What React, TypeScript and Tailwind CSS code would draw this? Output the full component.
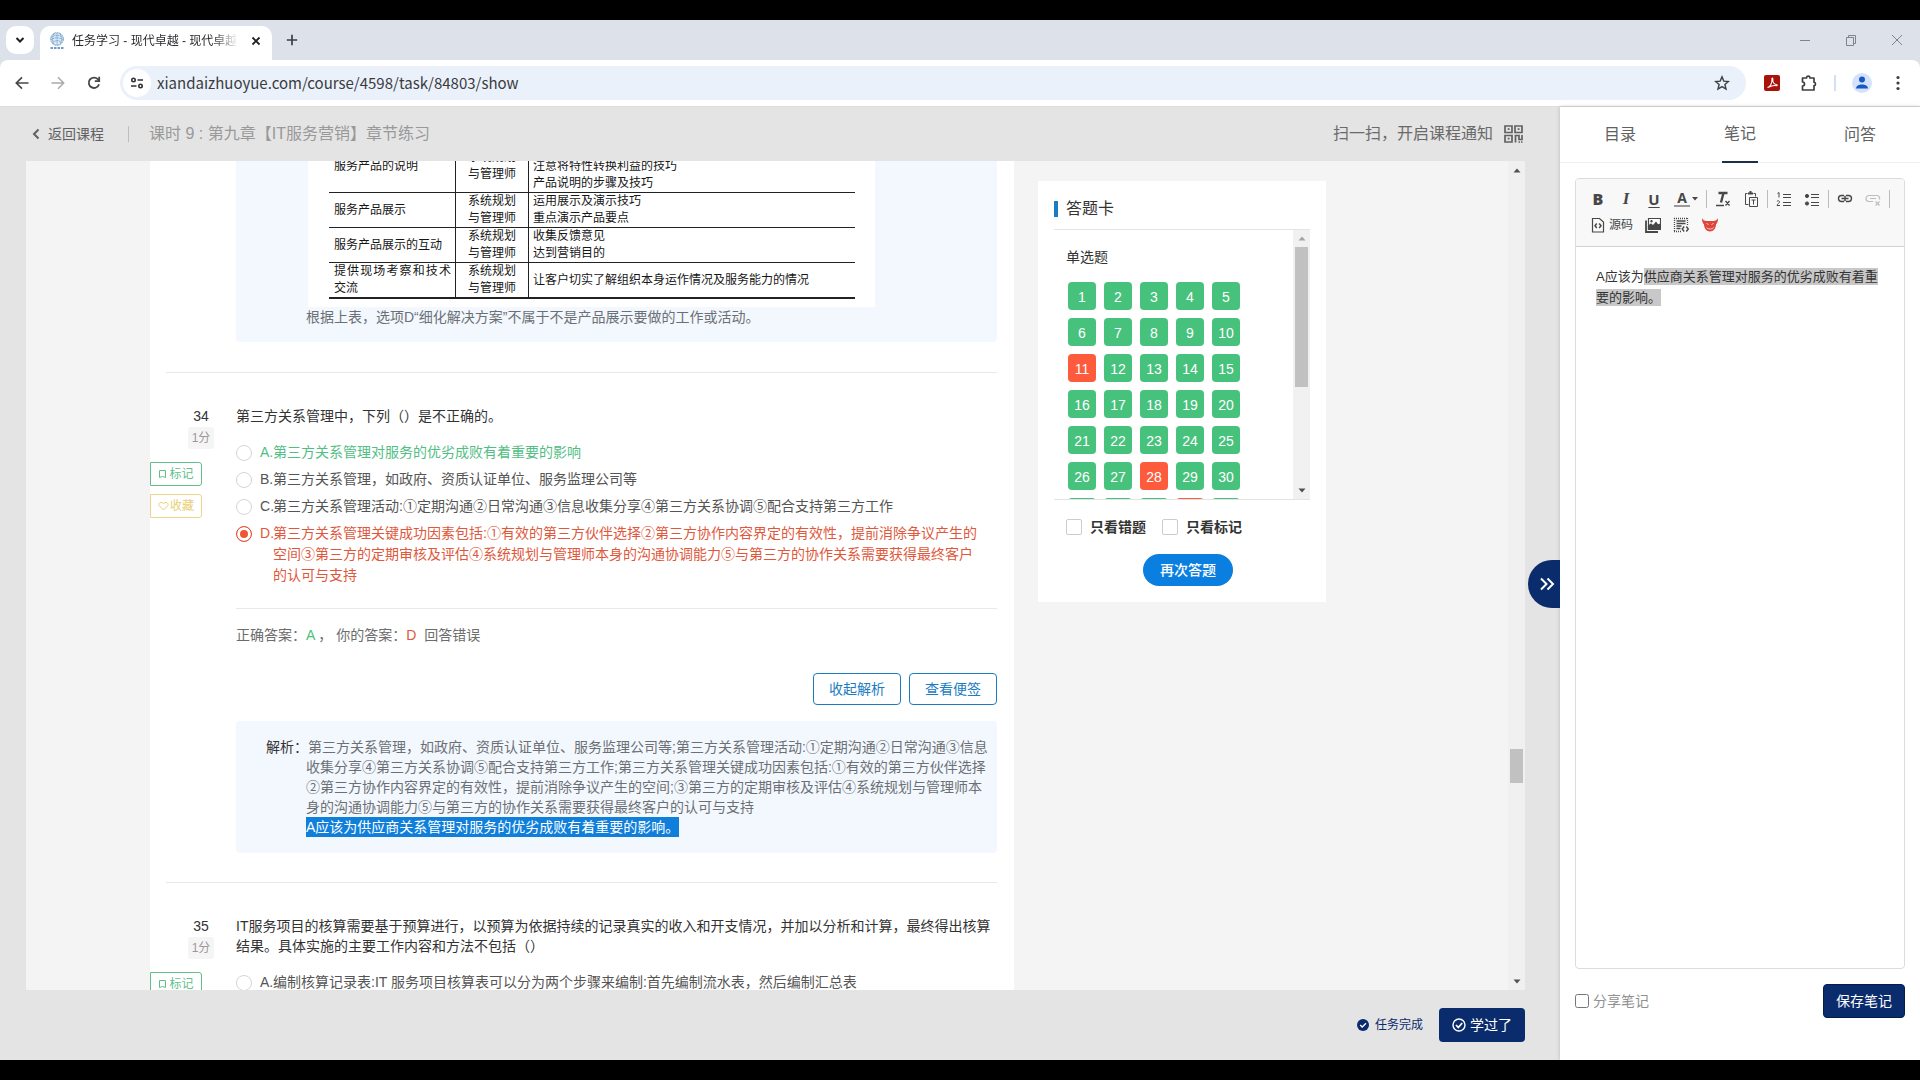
import React from "react";

const CJK = "font-['Liberation_Sans','Noto_Sans_CJK_SC',sans-serif]";

/* ---------- browser chrome ---------- */

function Favicon() {
  return (
    <svg width="18" height="18" viewBox="0 0 18 18" fill="none" stroke="#6f9cc7">
      <circle cx="9" cy="7" r="6.3" fill="#dbe8f4" strokeDasharray="2 .6" />
      <path d="M3.500 5.500c3-3 8-3 11 0M3 8c3.500-3 8.500-3 12 0M4.500 10.500c3-2.500 6-2.500 9 0M9 1v12M6 1.700c-2 3.500-2 7 0 10.600M12 1.700c2 3.500 2 7 0 10.600" strokeWidth=".8" strokeDasharray="1.600 .6" />
      <path d="M2.500 16h13" strokeWidth="2" strokeDasharray="2.500 1" />
    </svg>
  );
}

function TabStrip() {
  return (
    <div className="flex h-10 shrink-0 items-center bg-[#dde2ea] pl-1.5">
      <button aria-label="搜索标签页" className="flex size-[28px] items-center justify-center rounded-[10px] bg-white">
        <svg width="10" height="8" viewBox="0 0 10 8" fill="none" stroke="#202124" strokeWidth="2">
          <path d="M1.500 2 5 5.500 8.500 2" />
        </svg>
      </button>
      <div className="ml-1.5 mt-1.5 flex h-[34px] w-[232px] items-center self-start rounded-t-[10px] bg-white pb-1 pl-2 pr-2.5">
        <Favicon />
        <span className="ml-1.5 flex-1 overflow-hidden whitespace-nowrap text-[12px] leading-4 text-[#2b2c2f] [mask-image:linear-gradient(90deg,#000_85%,transparent)]">
          任务学习 - 现代卓越 - 现代卓越
        </span>
        <button aria-label="关闭标签页" className="ml-3">
          <svg width="12" height="12" viewBox="0 0 12 12" stroke="#202124" strokeWidth="1.800">
            <path d="m2.500 2.500 7 7m0-7-7 7" />
          </svg>
        </button>
      </div>
      <button aria-label="新标签页" className="ml-3.5">
        <svg width="12" height="12" viewBox="0 0 12 12" stroke="#3c4043" strokeWidth="1.700">
          <path d="M6 .8v10.400M.8 6h10.400" />
        </svg>
      </button>
      <div className="ml-auto flex gap-[34px] pr-[17px]">
        <button aria-label="最小化">
          <svg width="12" height="12" viewBox="0 0 12 12" stroke="#80848b">
            <path d="M1 6.500h10" />
          </svg>
        </button>
        <button aria-label="还原">
          <svg width="12" height="12" viewBox="0 0 12 12" fill="none" stroke="#80848b">
            <path d="M1.500 3.500h7v8h-7zM3.500 3.500v-2h7v8h-2" />
          </svg>
        </button>
        <button aria-label="关闭">
          <svg width="12" height="12" viewBox="0 0 12 12" stroke="#80848b">
            <path d="m1 1 10 10M11 1 1 11" />
          </svg>
        </button>
      </div>
    </div>
  );
}

function AddressBar() {
  return (
    <div className="bg-[#dde2ea]">
      <div className="flex h-[46px] items-center rounded-t-[8px] bg-white pl-[14px] pr-[14px]">
        <button aria-label="后退">
          <svg width="16" height="16" viewBox="0 0 16 16" fill="none" stroke="#44474b" strokeWidth="1.700">
            <path d="M14.500 8H2.500M8 2.300 2.300 8 8 13.700" />
          </svg>
        </button>
        <button aria-label="前进" className="ml-5">
          <svg width="16" height="16" viewBox="0 0 16 16" fill="none" stroke="#a9abae" strokeWidth="1.500">
            <path d="M1.500 8h12M8 2.300 13.700 8 8 13.700" />
          </svg>
        </button>
        <button aria-label="重新加载" className="ml-5">
          <svg width="16" height="16" viewBox="0 0 16 16" fill="none" stroke="#44474b" strokeWidth="1.800">
            <path d="M13 9.200A5.200 5.200 0 1 1 11.800 4.200L13 5.500" />
            <path d="M13.200 1.800v4.400H8.800" />
          </svg>
        </button>
        <div className="ml-[18px] flex h-[34px] min-w-0 flex-1 items-center rounded-full bg-[#eaf1fa] pl-[3px] pr-4">
          <span className="flex size-7 items-center justify-center rounded-full bg-white">
            <svg width="14" height="14" viewBox="0 0 14 14" fill="none" stroke="#303134" strokeWidth="1.600">
              <circle cx="3.500" cy="4" r="1.700" />
              <path d="M7.500 4H13M1 10h5.500" />
              <circle cx="10.500" cy="10" r="1.700" />
            </svg>
          </span>
          <input
            aria-label="地址栏"
            className="ml-1.5 min-w-0 flex-1 bg-transparent font-['Noto_Sans_CJK_SC',sans-serif] text-[15px] leading-5 text-[#3a3b3e] outline-none"
            defaultValue="xiandaizhuoyue.com/course/4598/task/84803/show"
          />
          <button aria-label="收藏此页">
            <svg width="16" height="16" viewBox="0 0 16 16" fill="none" stroke="#3c4043" strokeWidth="1.400">
              <path d="m8 1.800 1.800 4.300 4.600.4-3.500 3 1.100 4.600L8 11.600l-4 2.500 1.100-4.600-3.500-3 4.600-.4z" />
            </svg>
          </button>
        </div>
        <button aria-label="Adobe Acrobat" className="ml-[18px]">
          <svg width="16" height="16" viewBox="0 0 16 16">
            <rect width="16" height="16" rx="2" fill="#a8120b" />
            <path d="M3.500 12.500c2.500-.7 4.800-4 4.500-8.500-.2-1.500 1-1.200.8.200C8.400 7.300 10 9.500 12.800 9.800c.8.300.4 1-.3.900-3-.5-5-.1-8 1.500" fill="none" stroke="#fff" strokeWidth="1.100" />
          </svg>
        </button>
        <button aria-label="扩展程序" className="ml-5">
          <svg width="18" height="18" viewBox="0 0 18 18" fill="none" stroke="#3c4043" strokeWidth="1.700">
            <path d="M2.500 4h4c-.2-2.600 3.700-2.600 3.500 0H14v4.200c2 0 2 3.400 0 3.400V16H2.500v-4c2.700-.2 2.700-3.800 0-4z" strokeLinejoin="round" />
          </svg>
        </button>
        <span className="ml-4 h-4 w-0.5 bg-[#d3e0f2]" />
        <button aria-label="个人资料" className="ml-4">
          <svg width="20" height="20" viewBox="0 0 20 20">
            <circle cx="10" cy="10" r="10" fill="#d3e3fb" />
            <circle cx="10" cy="6.600" r="3" fill="#1a56c4" />
            <path d="M4 15.500c0-5.500 12-5.500 12 0z" fill="#1a56c4" />
          </svg>
        </button>
        <button aria-label="更多" className="ml-[18px]">
          <svg width="16" height="16" viewBox="0 0 16 16" fill="#3c4043">
            <circle cx="8" cy="2.500" r="1.600" />
            <circle cx="8" cy="8" r="1.600" />
            <circle cx="8" cy="13.500" r="1.600" />
          </svg>
        </button>
      </div>
    </div>
  );
}

/* ---------- question paper ---------- */

const cellName = "border-r border-b border-[#222] pl-[5px] pr-[5px] align-middle";
const cellRole = "border-r border-b border-[#222] text-center align-middle";
const cellTodo = "border-b border-[#222] pl-1 align-middle";

function DutyTable() {
  return (
    <table className="-mt-[21px] ml-[21px] w-[526px] table-fixed border-separate border-spacing-0 text-[12px] leading-[17px] text-[#161616]">
      <colgroup>
        <col className="w-[127px]" />
        <col className="w-[73px]" />
        <col />
      </colgroup>
      <tbody>
        <tr className="h-[53px]">
          <td className={cellName}>服务产品的说明</td>
          <td className={cellRole}>系统规划<br />与管理师</td>
          <td className="border-b border-[#222] pl-1 align-bottom">
            注意将特性转换利益的技巧<br />产品说明的步骤及技巧
          </td>
        </tr>
        <tr className="h-[35px]">
          <td className={cellName}>服务产品展示</td>
          <td className={cellRole}>系统规划<br />与管理师</td>
          <td className={cellTodo}>运用展示及演示技巧<br />重点演示产品要点</td>
        </tr>
        <tr className="h-[35px]">
          <td className={cellName}>服务产品展示的互动</td>
          <td className={cellRole}>系统规划<br />与管理师</td>
          <td className={cellTodo}>收集反馈意见<br />达到营销目的</td>
        </tr>
        <tr className="h-[36px]">
          <td className="border-r border-b-2 border-[#222] pl-[5px] pr-[4px] text-justify align-middle">提供现场考察和技术交流</td>
          <td className="border-r border-b-2 border-[#222] text-center align-middle">系统规划<br />与管理师</td>
          <td className="border-b-2 border-[#222] pl-1 align-middle">让客户切实了解组织本身运作情况及服务能力的情况</td>
        </tr>
      </tbody>
    </table>
  );
}

function QuestionRail({ no }: { no: number }) {
  return (
    <div className="flex w-[86px] shrink-0 flex-col items-start">
      <div className="ml-[38px] flex w-[26px] flex-col items-center text-[14px]">
        <span className="leading-5 text-[#333]">{no}</span>
        <span className="mt-px w-full rounded-[3px] bg-[#f5f5f5] text-center text-[12px] leading-[22px] text-[#999]">1分</span>
      </div>
      <button className="mt-[13px] flex h-6 w-[52px] items-center justify-center gap-0.5 rounded-r-[3px] border border-[#5fc08d] text-[12px] text-[#5fc08d]">
        <svg width="9" height="10" viewBox="0 0 9 10" fill="none" stroke="currentColor">
          <path d="M1.500 1.500h6v7l-3-1-3 1z" />
        </svg>
        标记
      </button>
      <button className="mt-2 flex h-6 w-[52px] items-center justify-center gap-px rounded-r-[3px] border border-[#ead68a] text-[12px] text-[#e8cf74]">
        <svg width="11" height="10" viewBox="0 0 11 10" fill="none" stroke="currentColor">
          <path d="M5.500 9 1.500 5C-.5 2.500 3 0 5.500 2.500 8 0 11.500 2.500 9.500 5z" />
        </svg>
        收藏
      </button>
    </div>
  );
}

function Option({ name, mark, text, tone = "text-[#555]", checked = false }: { name: string; mark: string; text: string; tone?: string; checked?: boolean }) {
  return (
    <label className={"flex items-start text-[14px] leading-[21px] " + tone}>
      <input
        type="radio"
        name={name}
        defaultChecked={checked}
        className="mt-[3px] mr-2 size-4 shrink-0 appearance-none rounded-full border border-[#d5d5d5] bg-white checked:border-[#e0523a] checked:bg-[#ee5537] checked:shadow-[inset_0_0_0_3px_#fff]"
      />
      <span className="w-[13px] shrink-0">{mark}.</span>
      <span className="pr-[15px]">{text}</span>
    </label>
  );
}

function Paper() {
  return (
    <div className="max-w-[864px] flex-1 bg-white pr-[17px]">
      <div className="ml-[86px] rounded-b-[4px] bg-[#f3f8fe] pb-[15px]">
        <div className="ml-[72px] w-[567px] bg-white pb-2">
          <DutyTable />
        </div>
        <p className="pl-[70px] text-[14px] leading-5 text-[#6c7075]">根据上表，选项D“细化解决方案”不属于不是产品展示要做的工作或活动。</p>
      </div>

      <section className="mt-[30px] ml-4 border-t border-[#e8e8e8] pt-[33px]">
        <div className="-ml-4 flex">
          <QuestionRail no={34} />
          <div className="min-w-0 flex-1">
            <h3 className="text-[14px] leading-5 text-[#333]">第三方关系管理中，下列（）是不正确的。</h3>
            <div className="mt-4 flex flex-col gap-1.5">
              <Option name="q34" mark="A" tone="text-[#52be85]" text="第三方关系管理对服务的优劣成败有着重要的影响" />
              <Option name="q34" mark="B" text="第三方关系管理，如政府、资质认证单位、服务监理公司等" />
              <Option name="q34" mark="C" text="第三方关系管理活动:①定期沟通②日常沟通③信息收集分享④第三方关系协调⑤配合支持第三方工作" />
              <Option name="q34" mark="D" checked tone="text-[#e0583c]" text="第三方关系管理关键成功因素包括:①有效的第三方伙伴选择②第三方协作内容界定的有效性，提前消除争议产生的空间③第三方的定期审核及评估④系统规划与管理师本身的沟通协调能力⑤与第三方的协作关系需要获得最终客户的认可与支持" />
            </div>
            <p className="mt-[22px] border-t border-[#e8e8e8] pt-4 text-[14px] leading-5 text-[#6c6c6c]">
              正确答案：<span className="text-[#46c37b]">A</span>
              <span className="ml-[3px]">，</span> 你的答案：<span className="mr-1 text-[#e0583c]">D</span> 回答错误
            </p>
            <div className="mt-7 flex justify-end gap-2">
              <button className="h-8 w-[88px] rounded-[4px] border border-[#1b7cc2] text-[14px] text-[#1b7cc2]">收起解析</button>
              <button className="h-8 w-[88px] rounded-[4px] border border-[#1b7cc2] text-[14px] text-[#1b7cc2]">查看便签</button>
            </div>
            <div className="mt-4 rounded-[4px] bg-[#f3f8fe] py-4 pl-[70px] pr-2 text-[14px] leading-5 text-[#6c7075]">
              <p className="-indent-[40px]">
                <span className="text-[#333]">解析：</span>
                第三方关系管理，如政府、资质认证单位、服务监理公司等;第三方关系管理活动:①定期沟通②日常沟通③信息收集分享④第三方关系协调⑤配合支持第三方工作;第三方关系管理关键成功因素包括:①有效的第三方伙伴选择②第三方协作内容界定的有效性，提前消除争议产生的空间;③第三方的定期审核及评估④系统规划与管理师本身的沟通协调能力⑤与第三方的协作关系需要获得最终客户的认可与支持
              </p>
              <p className="w-fit bg-[#0f7fdb] text-white">A应该为供应商关系管理对服务的优劣成败有着重要的影响。</p>
            </div>
          </div>
        </div>
      </section>

      <section className="mt-[29px] ml-4 border-t border-[#e8e8e8] pt-[33px]">
        <div className="-ml-4 flex">
          <QuestionRail no={35} />
          <div className="min-w-0 flex-1">
            <h3 className="text-[14px] leading-5 text-[#333]">
              IT服务项目的核算需要基于预算进行，以预算为依据持续的记录真实的收入和开支情况，并加以分析和计算，最终得出核算结果。具体实施的主要工作内容和方法不包括（）
            </h3>
            <div className="mt-4 flex flex-col gap-1.5">
              <Option name="q35" mark="A" text="编制核算记录表:IT 服务项目核算表可以分为两个步骤来编制:首先编制流水表，然后编制汇总表" />
            </div>
          </div>
        </div>
      </section>
    </div>
  );
}

/* ---------- answer card ---------- */

const WRONG = [11, 28, 34];
const NUMBERS = Array.from({ length: 35 }, (_, i) => i + 1);

function Arrow({ up = false, color }: { up?: boolean; color: string }) {
  return (
    <svg width="8" height="5" viewBox="0 0 8 5" fill={color}>
      <path d={up ? "M4 .5 7.500 4.500h-7z" : "M4 4.500.5.500h7z"} />
    </svg>
  );
}

function AnswerCard() {
  return (
    <aside className="mt-5 w-[288px] shrink-0 self-start bg-white px-4 pb-4">
      <h2 className="flex h-12 items-center pt-2 text-[16px] text-[#333]">
        <span className="mr-2 h-4 w-1 bg-[#1b7cc2]" />
        答题卡
      </h2>
      <div className="flex h-[271px] overflow-hidden border-y border-[#e4e4e4]">
        <div className="min-w-0 flex-1 pt-[17px] pl-3">
          <h3 className="text-[14px] leading-5 text-[#333]">单选题</h3>
          <div className="mt-[15px] ml-0.5 grid w-[172px] grid-cols-5 gap-2">
            {NUMBERS.map((n) => (
              <button
                key={n}
                className={
                  "size-7 rounded-[4px] pt-0.5 text-[14px] leading-none text-white " + (WRONG.includes(n) ? "bg-[#fd5b3b]" : "bg-[#47c27c]")
                }
              >
                {n}
              </button>
            ))}
          </div>
        </div>
        <div className="flex w-[17px] flex-col items-center bg-[#f1f1f1]">
          <span className="flex h-[17px] items-center"><Arrow up color="#a3a3a3" /></span>
          <span className="h-[140px] w-[13px] bg-[#c1c1c1]" />
          <span className="mt-auto flex h-[17px] items-center"><Arrow color="#505050" /></span>
        </div>
      </div>
      <div className="pl-3">
        <div className="mt-[17px] flex h-5 items-center gap-4 text-[14px] font-bold text-[#333]">
          {["只看错题", "只看标记"].map((t) => (
            <label key={t} className="flex items-center gap-2">
              <input type="checkbox" className="size-4 appearance-none rounded-[2px] border border-[#ccc] bg-white" />
              {t}
            </label>
          ))}
        </div>
        <button className="mx-auto mt-[17px] block h-8 w-[90px] rounded-full bg-[#0b7fe0] text-[14px] font-medium text-white">再次答题</button>
      </div>
    </aside>
  );
}

/* ---------- notes panel ---------- */

function Tool({ label, children }: { label: string; children: React.ReactNode }) {
  return (
    <button aria-label={label} className="flex h-[26px] items-center px-1.5">
      {children}
    </button>
  );
}

const Sep = () => <span className="mx-0.5 h-[18px] w-px bg-[#bcbcbc]" />;

function EditorToolbar() {
  return (
    <div className="flex flex-col border-b border-[#d1d1d1] bg-[#f8f8f8] px-2 pt-[7px] pb-2 text-[#474747]">
      <div className="flex items-center">
        <Tool label="加粗"><span className="w-4 text-center font-['Open_Sans',sans-serif] text-[16px] font-extrabold leading-4">B</span></Tool>
        <Tool label="倾斜"><span className="w-4 text-center font-['Liberation_Serif',serif] text-[17px] font-bold italic leading-4">I</span></Tool>
        <Tool label="下划线"><span className="w-4 text-center font-['Open_Sans',sans-serif] text-[15px] font-bold leading-4 underline underline-offset-2">U</span></Tool>
        <Tool label="文本颜色">
          <span className="w-4 border-b-2 border-[#999] text-center font-['Open_Sans',sans-serif] text-[14px] font-bold leading-[14px]">A</span>
          <svg className="ml-0.5" width="6" height="4" viewBox="0 0 6 4" fill="currentColor"><path d="M0 0h6L3 3.500z" /></svg>
        </Tool>
        <Sep />
        <Tool label="清除格式">
          <svg width="16" height="16" viewBox="0 0 16 16" fill="none" stroke="currentColor">
            <path d="M3.500 2h9M8.500 2 6 11.500" strokeWidth="2.400" />
            <path d="M1 14.500h8M10.500 10l4 4.500m0-4.500-4 4.500" strokeWidth="1.300" />
          </svg>
        </Tool>
        <Tool label="粘贴为无格式文本">
          <svg width="16" height="16" viewBox="0 0 16 16" fill="none" stroke="currentColor">
            <path d="M4.500 2.500h-2v11h3M10.500 2.500h2v3" />
            <path d="M5 2.500h5M6.500 1h2" strokeWidth="2" />
            <path d="M6.500 6.500h8v9h-8zM8.500 9h4M10.500 9v4.500" />
          </svg>
        </Tool>
        <Sep />
        <Tool label="编号列表">
          <svg width="16" height="16" viewBox="0 0 16 16" fill="none" stroke="currentColor">
            <path d="M7 3.500h8M7 6.500h8M7 11.500h8M7 14.500h8" strokeWidth="1.200" />
            <path d="M1.500 2.500 3 1.500v5M1 10.500c0-1 2.500-1 2.500.3 0 1.200-2 2-2.500 3.700h3" />
          </svg>
        </Tool>
        <Tool label="项目列表">
          <svg width="16" height="16" viewBox="0 0 16 16" fill="none" stroke="currentColor">
            <path d="M7 3.500h8M7 6.500h8M7 11.500h8M7 14.500h8" strokeWidth="1.200" />
            <circle cx="3" cy="5" r="1.600" fill="currentColor" />
            <circle cx="3" cy="12.500" r="1.600" fill="currentColor" />
          </svg>
        </Tool>
        <Sep />
        <Tool label="插入链接">
          <svg width="16" height="16" viewBox="0 0 16 16" fill="none" stroke="currentColor" strokeWidth="1.400">
            <path d="M7 10.500H4.500a3 3 0 0 1 0-6H7M9 4.500h2.500a3 3 0 0 1 0 6H9M4.500 7.500h7" />
            <path d="M6 4.500c3 0 3 6 0 6M10 4.500c-3 0-3 6 0 6" strokeWidth="1" />
          </svg>
        </Tool>
        <Tool label="取消链接">
          <svg width="16" height="16" viewBox="0 0 16 16" fill="none" stroke="#bdbdbd" strokeWidth="1.200">
            <path d="M8 4.500H4a3 3 0 0 0 0 6h4M7 4.500h5a3 3 0 0 1 2.500 4M5 7.500h6" />
            <path d="m10.500 10.500 4 4m0-4-4 4" />
          </svg>
        </Tool>
        <Sep />
      </div>
      <div className="flex items-center">
        <Tool label="源码">
          <svg width="16" height="16" viewBox="0 0 16 16" fill="none" stroke="currentColor" strokeWidth="1.200">
            <path d="M2.500 1.500h7l4 3.500v10h-11z" />
            <path d="M6.800 6.500 5 8.800 6.800 11M9.200 6.500 11 8.800 9.200 11" strokeWidth="1.500" />
          </svg>
          <span className="ml-[3px] text-[12px]">源码</span>
        </Tool>
        <Tool label="图像">
          <svg width="16" height="16" viewBox="0 0 16 16" fill="none" stroke="currentColor" strokeWidth="1.200">
            <path d="M3.500 1.500h12v11h-12z" fill="#fff" />
            <path d="M3.500 12.500V9L6 7l2 2 3-3.500 2 2.500 2.500-1v5.500z" fill="currentColor" />
            <path d="M1 3.500v11.500h12" strokeWidth="1.800" />
            <circle cx="6.500" cy="4.200" r=".6" />
          </svg>
        </Tool>
        <Tool label="代码段">
          <svg width="16" height="16" viewBox="0 0 16 16" fill="none" stroke="currentColor">
            <path d="M1 1.500h14M1 14.500h8M1.500 1v14M14.500 1v7" strokeDasharray="1 1" strokeWidth="1.300" />
            <path d="M3.500 4h9M3.500 6.500h9M3.500 9h5M3.500 11.500h4" strokeWidth="1.400" />
            <path d="m11.200 9.500-2 2.500 2 2.500M13.300 9.500l2 2.500-2 2.500" strokeWidth="1.400" />
          </svg>
        </Tool>
        <Tool label="插件">
          <svg width="18" height="16" viewBox="0 0 18 16">
            <path d="M1 1c.8 2 2.500 3 4.500 3h7c2 0 3.700-1 4.500-3 .2 3-.6 5-2 6.500-.2 4-2.500 7-6 7s-5.800-3-6-7C1.600 6 .8 4 1 1z" fill="#df463b" />
            <path d="M5.500 10.500c1 2 6 2 7 0M5.500 6.500l2 1M12.500 6.500l-2 1" fill="none" stroke="#f7c4bf" />
          </svg>
        </Tool>
      </div>
    </div>
  );
}

function NotesPanel() {
  return (
    <aside className="relative flex w-[360px] shrink-0 flex-col bg-white shadow-[0_0_4px_rgba(0,0,0,0.200)]">
      <button
        aria-label="收起侧栏"
        className="absolute top-[453px] right-full flex h-12 w-8 items-center justify-center rounded-l-full bg-[#0a2b6c] pl-1.5"
      >
        <svg width="16" height="16" viewBox="0 0 16 16" fill="none" stroke="#fff" strokeWidth="2">
          <path d="m2 2.500 5.500 5.500L2 13.500M8.500 2.500 14 8l-5.500 5.500" />
        </svg>
      </button>
      <nav className="grid h-14 shrink-0 grid-cols-3 border-b border-[#f0f0f0] text-[16px] text-[#616161]">
        <a href="#list" className="flex items-center justify-center">目录</a>
        <a href="#notes" className="-mb-px flex items-center justify-self-center border-b-2 border-[#1b3048] px-0.5">笔记</a>
        <a href="#qa" className="flex items-center justify-center">问答</a>
      </nav>
      <div className="mx-[15px] mt-[15px] flex flex-1 flex-col overflow-hidden rounded-[4px] border border-[#dcdcdc]">
        <EditorToolbar />
        <div
          role="textbox"
          aria-label="笔记内容"
          contentEditable
          suppressContentEditableWarning
          className="flex-1 px-5 py-[19px] text-[13px] leading-[21px] text-[#333] outline-none"
        >
          A应该为<span className="bg-[#c8c8c8] py-[1px]">供应商关系管理对服务的优劣成败有着重要的影响。</span>
        </div>
      </div>
      <div className="mx-[15px] mt-[15px] mb-[42px] flex h-[34px] shrink-0 items-center justify-between">
        <label className="flex items-center gap-1 text-[14px] text-[#919191]">
          <input type="checkbox" className="size-[14px]" />
          分享笔记
        </label>
        <button className="h-[34px] w-[82px] rounded-[4px] border border-[#061c4a] bg-[#0a2b6c] text-[14px] text-white">保存笔记</button>
      </div>
    </aside>
  );
}

/* ---------- page ---------- */

export default function App() {
  return (
    <div className={"flex h-screen flex-col overflow-hidden bg-black py-5 " + CJK}>
      <TabStrip />
      <AddressBar />
      <div className="flex min-h-0 flex-1 border-t border-[#dcdcdc]">
        <main className="flex min-w-0 flex-1 flex-col bg-[#e4e4e4] pr-[35px] pl-[26px]">
          <header className="flex h-[54px] shrink-0 items-center">
            <a href="#course" className="ml-[6px] flex items-center text-[14px] text-[#616161]">
              <svg className="mr-2" width="8" height="12" viewBox="0 0 8 12" fill="none" stroke="#616161" strokeWidth="2">
                <path d="M6.500 1.500 2 6l4.500 4.500" />
              </svg>
              返回课程
            </a>
            <span className="mx-5 ml-6 h-4 w-px bg-[#bdbdbd]" />
            <h1 className="text-[16px] text-[#999]">课时 9 : 第九章【IT服务营销】章节练习</h1>
            <span className="ml-auto text-[16px] text-[#6a6a6a]">扫一扫，开启课程通知</span>
            <svg className="mr-[2px] ml-[11px]" width="19" height="18" viewBox="0 0 19 18" fill="none" stroke="#616161" strokeWidth="1.700">
              <path d="M1 1h7v6.500H1zM11 1h7v6.500h-7zM1 10.500h7V17H1z" />
              <path d="M3.700 4.200h1.800M13.700 4.200h1.800M3.700 13.700h1.800M11.500 17.500v-7h3.500v4h3v-4.500M14.500 17h1.500M17 17h1.500" />
            </svg>
          </header>
          <div className="flex min-h-0 flex-1 overflow-hidden bg-[#f4f4f4]">
            <div className="min-w-0 flex-1 overflow-hidden">
              <div className="mx-auto flex w-full max-w-[1234px] items-stretch gap-6">
                <Paper />
                <AnswerCard />
              </div>
            </div>
            <div className="flex w-[17px] shrink-0 flex-col items-center bg-[#f0f0f0]">
              <span className="flex h-[18px] items-center"><Arrow up color="#505050" /></span>
              <span className="flex-[570]" />
              <span className="h-[34px] w-[13px] bg-[#c1c1c1]" />
              <span className="flex-[189]" />
              <span className="flex h-[18px] items-center"><Arrow color="#505050" /></span>
            </div>
          </div>
          <footer className="flex h-[70px] shrink-0 items-center justify-end text-[#0a2b6c]">
            <svg width="12" height="12" viewBox="0 0 12 12">
              <circle cx="6" cy="6" r="6" fill="#0a2b6c" />
              <path d="m3.200 6 2 2 3.800-3.800" fill="none" stroke="#fff" strokeWidth="1.300" />
            </svg>
            <span className="ml-1.5 text-[12px]">任务完成</span>
            <button className="ml-4 flex h-[34px] w-[86px] items-center justify-center gap-1 rounded-[4px] bg-[#0a2b6c] text-[14px] text-white">
              <svg width="14" height="14" viewBox="0 0 14 14" fill="none" stroke="#fff" strokeWidth="1.400">
                <circle cx="7" cy="7" r="6" />
                <path d="m4 7 2.300 2.500L10.200 5" strokeWidth="1.700" />
              </svg>
              学过了
            </button>
          </footer>
        </main>
        <NotesPanel />
      </div>
    </div>
  );
}
